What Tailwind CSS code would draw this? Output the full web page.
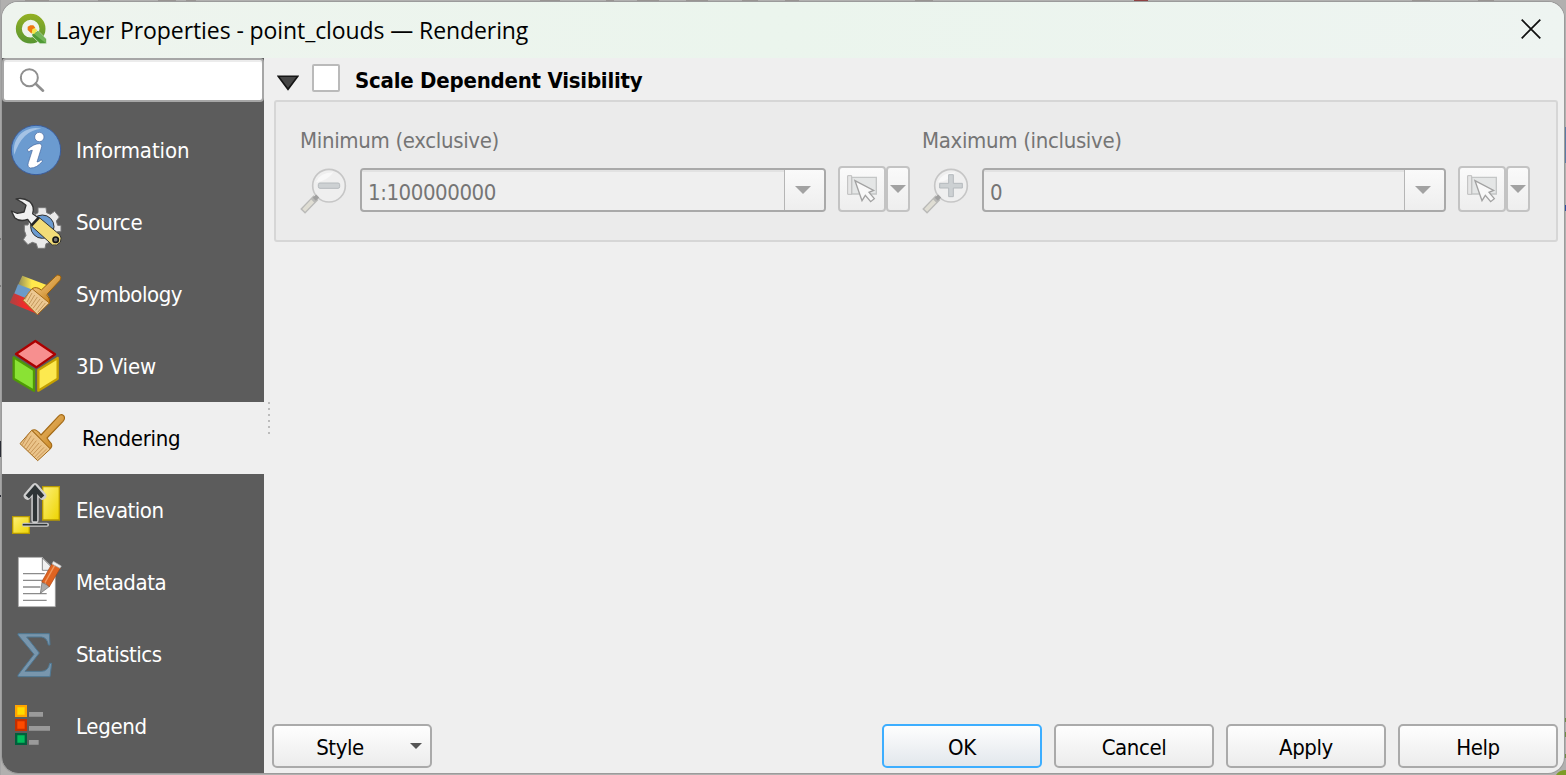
<!DOCTYPE html>
<html lang="en">
<head>
<meta charset="utf-8">
<title>Layer Properties</title>
<script src="https://cdn.jsdelivr.net/npm/@tailwindcss/browser@4"></script>
</head>
<body class="w-[1566px] h-[775px] overflow-hidden bg-[#b1b0af] font-['DejaVu_Sans_Condensed','DejaVu_Sans',sans-serif] text-[22px] text-black">
<svg class="absolute left-0 top-0" width="1566" height="775" viewBox="0 0 1566 775">
  <path d="M0 0H1V775H0z" fill="#a6a6a6"/>
  <path d="M1134 0h14v3h-14z" fill="#8f4243"/>
  <path d="M25 0h24v2h-24zM98 0h12v2h-12zM158 0h18v2h-18zM186 0h10v2h-10zM540 0h20v2h-20zM606 0h8v2h-8zM637 0h22v2h-22zM686 0h22v2h-22zM742 0h16v2h-16zM785 0h14v2h-14zM915 0h18v2h-18zM1412 0h18v2h-18zM1478 0h16v2h-16z" fill="#999593"/>
  <path d="M0 441h2v16H0zM0 495h2v2H0z" fill="#2b2d36"/><path d="M0 238h2v2H0zM0 285h2v2H0z" fill="#7a7a7a"/>
  <path d="M1564 127h2v36h-2z" fill="#5d7ba3"/><path d="M1564 205h2v6h-2z" fill="#2e4fa0"/>
  <path d="M1564 718h2v4h-2zM1564 732h2v5h-2zM1564 754h2v4h-2z" fill="#6e8c48"/>
  <path d="M1556 775q3-5 10-5v5z" fill="#7d9c26"/>
</svg>
<div class="relative w-full h-full pl-[2px] pt-[2px]">
<main class="w-[1562px] h-[771px] rounded-2xl overflow-hidden bg-[#efefef] flex flex-col shadow-[0_0_0_1px_#9b9b9b]">
  <header class="h-14 shrink-0 flex items-center pl-[13px] pr-[23px] bg-linear-to-r from-[#eef4ee] via-[#ebf5ed] to-[#eef4f1]">
    <svg class="w-8 h-8 shrink-0 mt-[-2px]" viewBox="45 39 96 96">
      <defs><linearGradient id="q" gradientUnits="userSpaceOnUse" x1="0" y1="42" x2="0" y2="130"><stop offset="0" stop-color="#93b023"/><stop offset="1" stop-color="#589632"/></linearGradient></defs>
      <circle cx="92" cy="86" r="35.500" fill="none" stroke="url(#q)" stroke-width="18"/>
      <path d="M96 101L114 92L139 117V131H120L96 108z" fill="#4f9a35" stroke="#eaf3e6" stroke-width="2"/><path d="M102 102L114 93L137 117V129z" fill="#74b658"/>
      <path d="M94 88l10-5 8 8-10 12-9-6z" fill="#f4e64b"/><path d="M83 80l8-4h9l6 7-9 5-2 13-12-11z" fill="#ee7913"/>
    </svg>
    <h1 class="ml-[9px] mt-[1px] font-['Open_Sans','Noto_Sans',sans-serif] text-[23px] tracking-[-0.09px] leading-[30px] whitespace-nowrap pb-[2px]">Layer Properties - point_clouds — Rendering</h1>
    <svg class="w-5 h-5 ml-auto mt-[-2px]" viewBox="0 0 20 20"><path d="M.7.7l18.6 18.6M19.3.7L.7 19.3" stroke="#111" stroke-width="1.8"/></svg>
  </header>

  <div class="flex flex-1 min-h-0">
    <aside class="w-[262px] shrink-0 bg-[#5c5c5c] text-white">
      <div class="h-11 border-2 border-[#a6a6a6] rounded-[4px] bg-white shadow-[inset_0_2px_0_#ececec]">
        <svg class="w-[60px] h-10" viewBox="12 180 180 120"><circle cx="88" cy="233" r="25.500" fill="none" stroke="#8f8f8f" stroke-width="6"/><path d="M107 251l22 21" stroke="#8f8f8f" stroke-width="8" stroke-linecap="round"/></svg>
      </div>
      <nav class="mt-3 leading-[74px]">
        <div class="h-[72px] flex">
          <svg class="w-[66px] h-[72px] shrink-0" viewBox="6 12 198 216"><circle cx="108" cy="120" r="74" fill="#6b9bd0" stroke="#3a5c9b" stroke-width="3"/><path d="M43 134A66 66 0 0 1 124 56Q67 60 43 134z" fill="#a5c3e5"/><g fill="#fff" stroke="#45669f" stroke-width="2"><circle cx="118" cy="81" r="14"/><path d="M82 119Q102 100 119 101Q128 103 124 114L111 156Q117 156 124 149L127 154Q110 175 91 174Q81 171 85 158L97 121Q91 120 86 126z"/></g></svg>
          <span class="ml-2 tracking-[-0.1px]">Information</span></div>
        <div class="h-[72px] flex">
          <svg class="w-[66px] h-[72px] shrink-0" viewBox="6 228 198 216"><g stroke="#333" stroke-width="3" stroke-linejoin="round"><path d="M114 293h24l2 15 11 5 13-9 14 17-9 12 4 13h10v19h-11l-3 12 9 13-14 15-14-8-12 4-3 14h-22l-4-14-12-4-13 7-14-15 8-13-4-12H73v-19h11l4-12-8-13 14-15 13 8 7-5z" fill="#e9e9e9" stroke="#777"/><circle cx="127" cy="350" r="35" fill="#6b9bd0"/><path d="M48 267Q70 262 88 274Q105 289 98 311L117 325L96 346L83 328Q60 337 44 323L34 303L52 310L72 306L78 286L65 276z" fill="#f1f1f1" stroke-width="4"/><path d="M117 322L179 374Q187 383 181 397Q171 409 157 405L92 346z" fill="#f3dd78"/></g><path d="M117 322L94 347" stroke="#242424" stroke-width="8"/><circle cx="167" cy="389" r="8" fill="#777" stroke="#151515" stroke-width="5"/></svg>
          <span class="ml-2 tracking-[-0.25px]">Source</span></div>
        <div class="h-[72px] flex">
          <svg class="w-[66px] h-[72px] shrink-0" viewBox="6 9 198 216">
            <defs><linearGradient id="y"><stop stop-color="#8f8b5a"/><stop offset=".45" stop-color="#ffe94c"/></linearGradient><linearGradient id="r"><stop stop-color="#a84343"/><stop offset=".5" stop-color="#f12b2b"/></linearGradient>
            <linearGradient id="w" x1="0" y1="0" x2="1" y2="1"><stop stop-color="#f0c47e"/><stop offset="1" stop-color="#c47d13"/></linearGradient></defs>
            <path d="M67 62L146 92L130 140L54 90z" fill="url(#y)"/><path d="M54 88L130 116L112 150L42 118z" fill="#6b9bc8"/><path d="M42 115L112 144L118 179L29 143z" fill="url(#r)"/>
            <g transform="translate(1 -3)"><path d="M123 108L166 67Q172 60 179 65Q185 71 179 79L138 123Q152 134 147 148L112 122z" fill="url(#w)" stroke="#9a5f08" stroke-width="3"/><path d="M95 104Q108 96 119 106L140 121Q152 134 146 149L132 153z" fill="url(#w)"/><path d="M95 104Q108 96 123 108M138 123Q152 134 146 149" fill="none" stroke="#9a5f08" stroke-width="3"/><path d="M95 104L147 147L111 182L68 139z" fill="#ecc892" stroke="#a36a19" stroke-width="3"/><path d="M87 112l-13 25M95 117l-15 27M103 123l-17 28M111 129l-19 28M119 135l-21 28M127 141l-21 28M135 147l-23 28" stroke="#b98e50" stroke-width="2.500"/></g></svg>
          <span class="ml-2 tracking-[-0.45px]">Symbology</span></div>
        <div class="h-[72px] flex">
          <svg class="w-[66px] h-[72px] shrink-0" viewBox="6 225 198 216"><g stroke-width="7" stroke-linejoin="round"><path d="M106 258L165 298L109 337L48 297z" fill="#f78f8f" stroke="#ac0000"/><path d="M41 307L102 345V407L41 371z" fill="#8ae234" stroke="#4e9a06"/><path d="M173 309L115 345V407L173 371z" fill="#fce94f" stroke="#c4a000"/></g></svg>
          <span class="ml-2 tracking-[-0.15px]">3D View</span></div>
        <div class="h-[72px] flex bg-[#efefef] text-black">
          <svg class="w-[66px] h-[72px] shrink-0" viewBox="6 21 198 216"><path d="M123 120L175 64Q183 55 191 62Q197 70 189 79L141 129Q145 136 154 146Q158 155 149 162L96 106Q108 99 123 120z" fill="url(#w)" stroke="#a36a16" stroke-width="3.500" stroke-linejoin="round"/><path d="M95 106L151 162L113 197L60 146z" fill="#ebc48a" stroke="#a36a19" stroke-width="3"/><path d="M86 116l-19 33M94 122l-21 33M102 130l-23 32M109 137l-24 31M117 144l-26 30M124 151l-27 29M132 157l-28 29M140 162l-30 29" stroke="#b98345" stroke-width="2.200"/></svg>
          <span class="ml-[14px] tracking-[-0.3px]">Rendering</span></div>
        <div class="h-[72px] flex">
          <svg class="w-[66px] h-[72px] shrink-0" viewBox="6 237 198 216"><defs><linearGradient id="g" x1="0" y1="0" x2="1" y2="1"><stop stop-color="#fdf07a"/><stop offset="1" stop-color="#edd400"/></linearGradient></defs><g fill="url(#g)" stroke="#b89a00" stroke-width="4"><path d="M128 275h50v100h-50z"/><path d="M38 365h50v50H38z"/></g><path d="M72 389h69" stroke="#ccc" stroke-width="12" stroke-linecap="round"/><path d="M105 374V284M82 303l23-27 23 27" fill="none" stroke="#cfcfcf" stroke-width="22" stroke-linecap="round" stroke-linejoin="round"/><path d="M105 379V282M82 306l23-27 23 27" fill="none" stroke="#2e3436" stroke-width="13"/><path d="M68 389h74" stroke="#2e3436" stroke-width="5"/></svg>
          <span class="ml-2 tracking-[-0.5px]">Elevation</span></div>
        <div class="h-[72px] flex">
          <svg class="w-[66px] h-[72px] shrink-0" viewBox="6 3 198 216"><path d="M55 37h72l39 38v110H55z" fill="#fff" stroke="#999" stroke-width="2"/><path d="M127 39v37h37z" fill="#f0f0f0" stroke="#555" stroke-width="2"/><path d="M69 86h65M69 106h64M69 126h52M69 146h71M69 166h71" stroke="#8b8b8b" stroke-width="4"/><path d="M126 112L121 145L149 124z" fill="#ababab" stroke="#666" stroke-width="2"/><path d="M156 56L125 111L137 115L148 125L181 69z" fill="#df6421" stroke="#a94410" stroke-width="2"/><path d="M164 61L135 113" stroke="#f39a61" stroke-width="4"/><path d="M160 49L184 63L180 70L156 57z" fill="#eee" stroke="#aaa" stroke-width="2"/></svg>
          <span class="ml-2 tracking-[-0.45px]">Metadata</span></div>
        <div class="h-[72px] flex">
          <svg class="w-[66px] h-[72px] shrink-0" viewBox="6 219 198 216"><path d="M54 266H148L150 300H145Q142 278 124 276H80L118 324L75 379H124Q145 379 149 355H155L150 395H54V390L102 328L54 270z" fill="#7896ad" stroke="#4f7893" stroke-width="3"/></svg>
          <span class="ml-2 tracking-[-0.5px]">Statistics</span></div>
        <div class="h-[72px] flex">
          <svg class="w-[66px] h-[72px] shrink-0" viewBox="6 435 198 216"><g stroke-width="7"><path d="M48.500 483.500h29v29h-29z" fill="#ffdc00" stroke="#ffa400"/><path d="M48.500 525.500h29v29h-29z" fill="#ff4b00" stroke="#c42f00"/><path d="M48.500 567.500h29v29h-29z" fill="#00be5b" stroke="#00603c"/></g><path d="M87 501h42v14H87zM87 543h63v14H87zM87 585h29v14H87z" fill="#9a9a9a"/></svg>
          <span class="ml-2 tracking-[-0.3px]">Legend</span></div>
      </nav>
    </aside>

    <div class="w-[10px] shrink-0 pt-[344px] pl-1"><div class="w-[2px] h-8 bg-[repeating-linear-gradient(to_bottom,#bcbcbc_0,#bcbcbc_2px,transparent_2px,transparent_6px)]"></div></div>

    <section class="flex-1 min-w-0 flex flex-col">
      <div class="h-[42px] flex items-start">
        <svg class="w-[22px] h-4 mt-[17px] ml-[3px]" viewBox="0 0 22 16"><path d="M1.200 1.200h19.600L11 14.300z" fill="#454545" stroke="#151515" stroke-width="1.600"/></svg>
        <div class="w-7 h-7 ml-[13px] mt-[6px] border-2 border-[#bababa] rounded-[2px] bg-white"></div>
        <h2 class="ml-[15px] mt-[7px] leading-8 font-bold tracking-[-0.22px] whitespace-nowrap">Scale Dependent Visibility</h2>
      </div>
      <div class="w-[1284px] h-[142px] border-2 border-[#d6d6d6] rounded-[3px] bg-[#ebebeb] flex text-[#757575]">
        <div class="w-[622px] pl-6 shrink-0">
          <div class="mt-[23px] h-8 leading-8 tracking-[-0.33px]">Minimum (exclusive)</div>
          <div class="flex mt-[9px] h-[46px]">
            <svg class="w-12 h-[46px] shrink-0 mt-[2px]" viewBox="90 337 144 138"><circle cx="177" cy="390" r="49" fill="#efefef" stroke="#c6c6c6" stroke-width="5"/><path d="M138 380Q150 350 190 350Q170 378 138 380z" fill="#f8f8f8"/><path d="M138 426L98 467" stroke="#b9b9b7" stroke-width="20"/><path d="M128 436L101 464" stroke="#dfddd3" stroke-width="12"/><path d="M143 421L133 431" stroke="#a0a0a0" stroke-width="13"/><rect x="145" y="382" width="64" height="16" rx="5" fill="#cdd1d3" stroke="#b5babd" stroke-width="3"/></svg>
            <div class="ml-3 mt-[2px] w-[466px] shrink-0 h-11 flex border-2 border-[#a9a9a9] rounded-[4px] overflow-hidden bg-[#efefef]">
              <div class="flex-1 pl-[6px] leading-[45px] tracking-[-0.42px] shadow-[inset_0_2px_0_#e2e2e2]">1:100000000</div>
              <div class="w-10 border-l border-[#b5b5b5] bg-linear-to-b from-[#fafafa] to-[#eeeeee] flex items-center justify-center"><svg class="w-4 h-2 mr-1" viewBox="0 0 16 8"><path d="M0 0h16L8 8z" fill="#a2a2a2"/></svg></div>
            </div>
            <div class="ml-3 w-12 shrink-0 h-[46px] border-2 border-[#c3c3c3] rounded-[4px] bg-linear-to-b from-[#fafafa] to-[#eeeeee]"><svg class="w-11 h-[42px]" viewBox="210 114 132 126"><path d="M245 142h74v50h-74z" fill="#e4e6e6" stroke="#c4c6c6" stroke-width="4"/><path d="M233 137h12v56h-12z" fill="#e6e6e6" stroke="#bdbdbd" stroke-width="3"/><path d="M255 152L276 212L286 196L302 215L313 206L297 187L311 181z" fill="#f8f8f8" stroke="#a2a2a2" stroke-width="4"/></svg></div>
            <div class="w-6 shrink-0 h-[46px] border-2 border-[#c3c3c3] rounded-[4px] bg-linear-to-b from-[#fafafa] to-[#eeeeee] flex items-center justify-center"><svg class="w-4 h-2" viewBox="0 0 16 8"><path d="M0 0h16L8 8z" fill="#a2a2a2"/></svg></div>
          </div>
        </div>
        <div class="pl-6 shrink-0">
          <div class="mt-[23px] h-8 leading-8 tracking-[-0.33px]">Maximum (inclusive)</div>
          <div class="flex mt-[9px] h-[46px]">
            <svg class="w-12 h-[46px] shrink-0 mt-[2px]" viewBox="90 337 144 138"><circle cx="177" cy="390" r="49" fill="#efefef" stroke="#c6c6c6" stroke-width="5"/><path d="M138 380Q150 350 190 350Q170 378 138 380z" fill="#f8f8f8"/><path d="M138 426L98 467" stroke="#b9b9b7" stroke-width="20"/><path d="M128 436L101 464" stroke="#dfddd3" stroke-width="12"/><path d="M143 421L133 431" stroke="#a0a0a0" stroke-width="13"/><path d="M170 357h14v26h27v14h-27v26h-14v-26h-27v-14h27z" fill="#cdd1d3" stroke="#b5babd" stroke-width="3" stroke-linejoin="round"/></svg>
            <div class="ml-3 mt-[2px] w-[464px] shrink-0 h-11 flex border-2 border-[#a9a9a9] rounded-[4px] overflow-hidden bg-[#efefef]">
              <div class="flex-1 pl-[6px] leading-[45px] shadow-[inset_0_2px_0_#e2e2e2]">0</div>
              <div class="w-10 border-l border-[#b5b5b5] bg-linear-to-b from-[#fafafa] to-[#eeeeee] flex items-center justify-center"><svg class="w-4 h-2 mr-1" viewBox="0 0 16 8"><path d="M0 0h16L8 8z" fill="#a2a2a2"/></svg></div>
            </div>
            <div class="ml-3 w-12 shrink-0 h-[46px] border-2 border-[#c3c3c3] rounded-[4px] bg-linear-to-b from-[#fafafa] to-[#eeeeee]"><svg class="w-11 h-[42px]" viewBox="210 114 132 126"><path d="M245 142h74v50h-74z" fill="#e4e6e6" stroke="#c4c6c6" stroke-width="4"/><path d="M233 137h12v56h-12z" fill="#e6e6e6" stroke="#bdbdbd" stroke-width="3"/><path d="M255 152L276 212L286 196L302 215L313 206L297 187L311 181z" fill="#f8f8f8" stroke="#a2a2a2" stroke-width="4"/></svg></div>
            <div class="w-6 shrink-0 h-[46px] border-2 border-[#c3c3c3] rounded-[4px] bg-linear-to-b from-[#fafafa] to-[#eeeeee] flex items-center justify-center"><svg class="w-4 h-2" viewBox="0 0 16 8"><path d="M0 0h16L8 8z" fill="#a2a2a2"/></svg></div>
          </div>
        </div>
      </div>
      <footer class="mt-auto mb-[5px] ml-[-2px] w-[1286px] flex gap-3 leading-[43px] text-center tracking-[-0.4px]">
        <button class="w-40 h-11 mr-auto flex border-2 border-[#aaaaaa] rounded-[5px] bg-linear-to-b from-[#fefefe] to-[#ececec]"><span class="w-[132px]">Style</span><svg class="w-3 h-[6px] mt-[17px] ml-1" viewBox="0 0 12 6"><path d="M0 0h12L6 6z" fill="#555"/></svg></button>
        <button class="w-40 h-11 border-2 border-[#3daeff] rounded-[5px] bg-linear-to-b from-[#fefefe] to-[#e2e7ec]">OK</button>
        <button class="w-40 h-11 border-2 border-[#aaaaaa] rounded-[5px] bg-linear-to-b from-[#fefefe] to-[#ececec]">Cancel</button>
        <button class="w-40 h-11 border-2 border-[#aaaaaa] rounded-[5px] bg-linear-to-b from-[#fefefe] to-[#ececec]">Apply</button>
        <button class="w-40 h-11 border-2 border-[#aaaaaa] rounded-[5px] bg-linear-to-b from-[#fefefe] to-[#ececec]">Help</button>
      </footer>
    </section>
  </div>
</main>
</div>
</body>
</html>
